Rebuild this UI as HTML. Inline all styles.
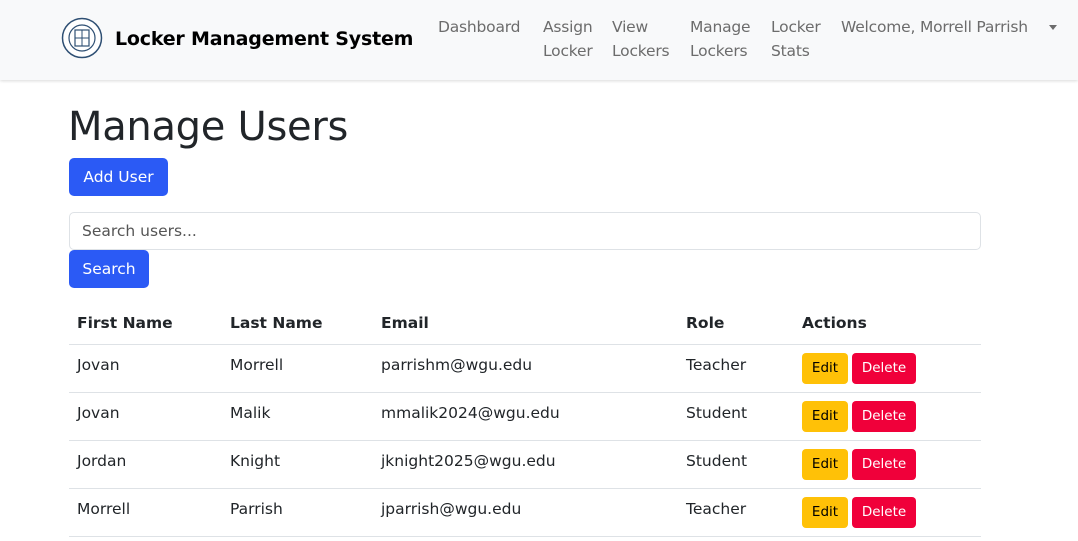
<!DOCTYPE html>
<html><head><meta charset="utf-8"><style>
*{box-sizing:border-box;margin:0;padding:0}
body{width:1078px;height:541px;overflow:hidden;background:#fff;font-family:"DejaVu Sans","Liberation Sans",sans-serif;color:#212529;position:relative}
.nav{position:absolute;left:0;top:0;width:1078px;height:80px;background:#f8f9fa;box-shadow:0 1px 3px rgba(0,0,0,.15)}
.a{position:absolute}
.brand{left:115px;top:28px;font-weight:bold;font-size:19px;color:#000;letter-spacing:-0.2px}
.nl{font-size:15.5px;color:#6c6c6c;line-height:24px;top:15px;letter-spacing:-0.2px}
h1{position:absolute;left:68px;top:104px;font-weight:normal;font-size:40px;letter-spacing:-0.3px}
.btn{position:absolute;background:#2b5af5;color:#fff;border-radius:5px;font-size:15.5px;text-align:center;line-height:38px;height:38px}
.inp{position:absolute;left:69px;top:212px;width:912px;height:38px;border:1px solid #dee2e6;border-radius:5px;font-size:15.5px;color:#555;padding-left:12px;line-height:36px}
.row{position:absolute;left:69px;width:912px;height:48px;border-bottom:1px solid #dee2e6;font-size:15.5px}
.row span{position:absolute;top:11px}
.th{font-weight:bold}
.e,.d{position:absolute;top:8px;height:31px;line-height:31px;border-radius:4px;font-size:13.5px;text-align:center}
.e{left:733px;width:46px;background:#ffc107;color:#000}
.d{left:783px;width:64px;background:#f0003a;color:#fff}
.caret{position:absolute;left:1049px;top:25px;width:0;height:0;border-left:4.5px solid transparent;border-right:4.5px solid transparent;border-top:5px solid #6c6c6c}
</style></head><body>
<div class="nav">
<svg class="a" style="left:61px;top:17px" width="42" height="42" viewBox="0 0 42 42"><circle cx="21" cy="21" r="19.5" fill="#fff" stroke="#2e4f73" stroke-width="1.5"/><circle cx="21" cy="21" r="13" fill="none" stroke="#2e4f73" stroke-width="1.2"/><rect x="14" y="13" width="14" height="16" fill="none" stroke="#2e4f73" stroke-width="1.2"/><line x1="21" y1="13" x2="21" y2="29" stroke="#2e4f73"/><line x1="14" y1="21" x2="28" y2="21" stroke="#2e4f73"/></svg>
<div class="a brand">Locker Management System</div>
<div class="a nl" style="left:438px">Dashboard</div>
<div class="a nl" style="left:543px">Assign<br>Locker</div>
<div class="a nl" style="left:612px">View<br>Lockers</div>
<div class="a nl" style="left:690px">Manage<br>Lockers</div>
<div class="a nl" style="left:771px">Locker<br>Stats</div>
<div class="a nl" style="left:841px">Welcome, Morrell Parrish</div>
<div class="caret"></div>
</div>
<h1>Manage Users</h1>
<div class="btn" style="left:69px;top:158px;width:99px">Add User</div>
<div class="inp">Search users...</div>
<div class="btn" style="left:69px;top:250px;width:80px">Search</div>
<div class="row th" style="top:297px"><span style="left:8px;top:17px">First Name</span><span style="left:161px;top:17px">Last Name</span><span style="left:312px;top:17px">Email</span><span style="left:617px;top:17px">Role</span><span style="left:733px;top:17px">Actions</span></div>
<div class="row" style="top:345px"><span style="left:8px">Jovan</span><span style="left:161px">Morrell</span><span style="left:312px">parrishm@wgu.edu</span><span style="left:617px">Teacher</span><div class="e">Edit</div><div class="d">Delete</div></div>
<div class="row" style="top:393px"><span style="left:8px">Jovan</span><span style="left:161px">Malik</span><span style="left:312px">mmalik2024@wgu.edu</span><span style="left:617px">Student</span><div class="e">Edit</div><div class="d">Delete</div></div>
<div class="row" style="top:441px"><span style="left:8px">Jordan</span><span style="left:161px">Knight</span><span style="left:312px">jknight2025@wgu.edu</span><span style="left:617px">Student</span><div class="e">Edit</div><div class="d">Delete</div></div>
<div class="row" style="top:489px"><span style="left:8px">Morrell</span><span style="left:161px">Parrish</span><span style="left:312px">jparrish@wgu.edu</span><span style="left:617px">Teacher</span><div class="e">Edit</div><div class="d">Delete</div></div>
</body></html>
